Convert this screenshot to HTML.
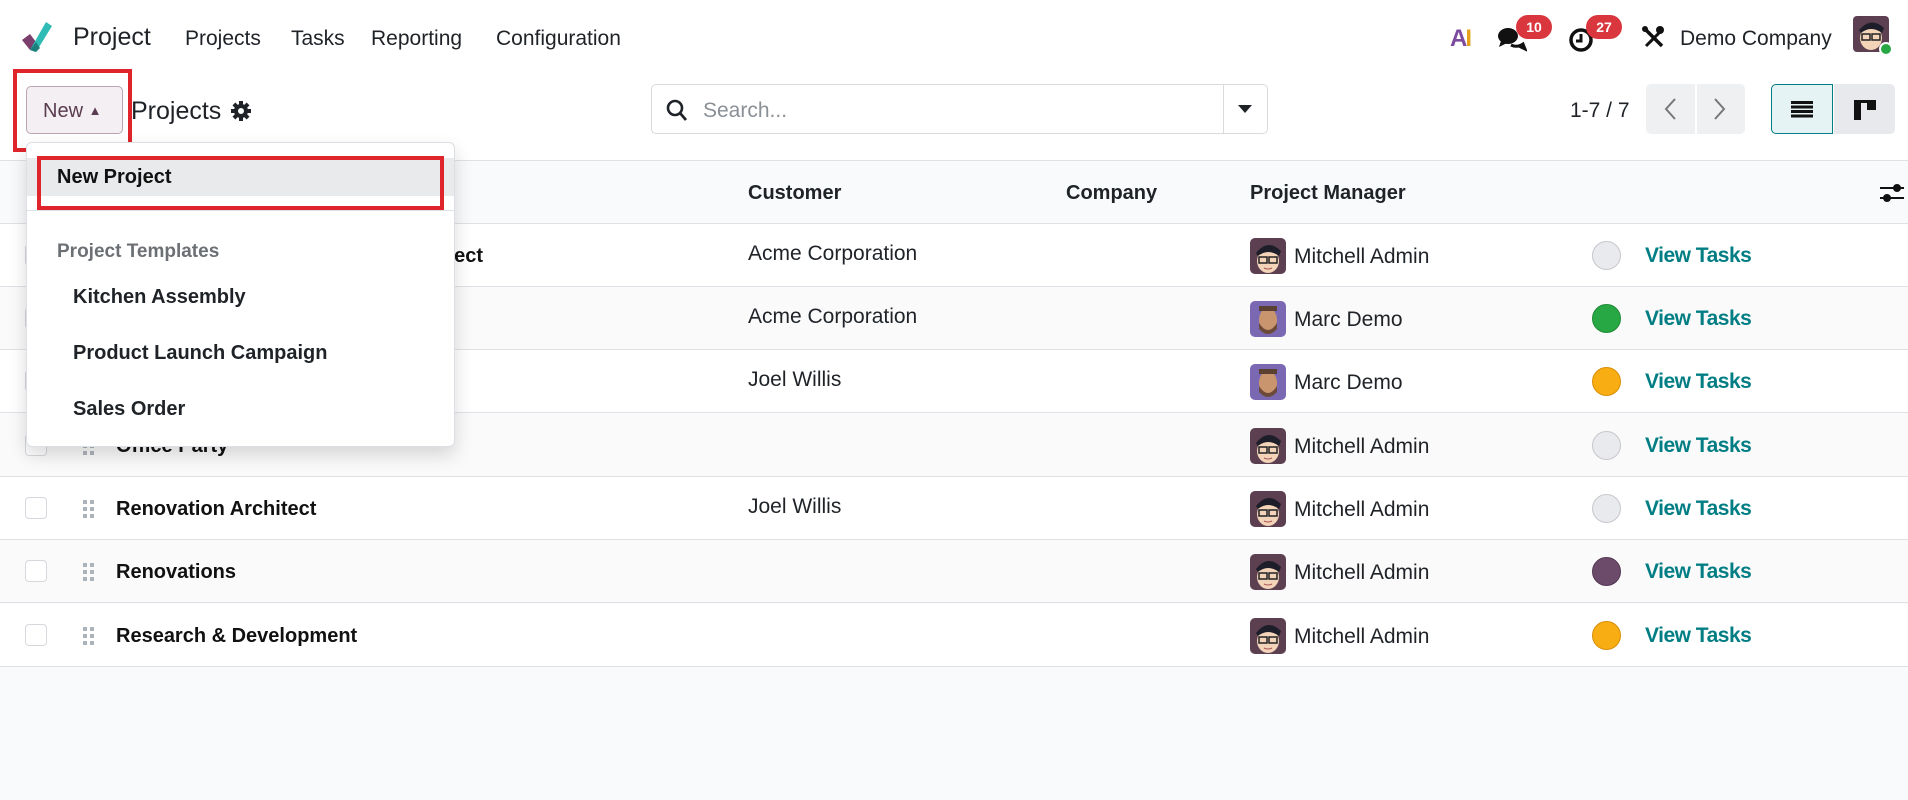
<!DOCTYPE html>
<html><head><meta charset="utf-8">
<style>
*{box-sizing:border-box;margin:0;padding:0}
body{width:1908px;height:800px;overflow:hidden;background:#f9fafb;font-family:"Liberation Sans",sans-serif;color:#1f2328;position:relative}
.abs{position:absolute}
.top{position:absolute;left:0;top:0;width:1908px;height:160px;background:#fff}
.nav{font-size:21px;top:27px;color:#1f2328}
.badge{background:#d9363e;color:#fff;font-size:14px;font-weight:bold;border-radius:12px;height:24px;line-height:24px;text-align:center;width:36px}
.row{position:absolute;left:0;width:1908px;height:63px;border-bottom:1px solid #dee2e6;background:#fff}
.row.alt{background:#fafafa}
.cb{position:absolute;left:25px;top:20px;width:22px;height:22px;border:1px solid #d5d8dc;border-radius:4px;background:#fff}
.drag{position:absolute;left:83px;top:23px;width:12px;height:18px}
.nm{position:absolute;left:116px;top:0;line-height:64px;font-size:20px;font-weight:bold;color:#111}
.av{position:absolute;left:1250px;top:14px;width:36px;height:36px;border-radius:5px;overflow:hidden}
.mgr{position:absolute;left:1294px;top:0;line-height:66px;font-size:21px;color:#1f2328}
.st{position:absolute;left:1592px;top:17px;width:29px;height:29px;border-radius:50%}
.vt{position:absolute;left:1645px;top:0;line-height:64px;font-size:21px;color:#017e84;font-weight:bold;letter-spacing:-0.5px}
.cu{position:absolute;left:748px;top:0;line-height:60px;font-size:21px}
.mi{position:absolute;left:73px;font-size:20px;font-weight:bold;color:#1f2328}
</style></head><body>
<div class="top"></div>
<svg class="abs" style="left:20px;top:18px" width="32" height="36" viewBox="0 0 32 36">
<path d="M2 22 L10 16 L16 24 L10 32 Z" fill="#7b3f6e"/>
<path d="M10 32 L26 4 L32 8 L16 34 Z" fill="#2ebcb4"/>
<path d="M10 32 L16 24 L20 30 L16 34 Z" fill="#1c7f7c"/>
</svg>
<div class="abs" style="left:73px;top:23px;font-size:25px;color:#1f2328">Project</div>
<div class="abs nav" style="left:185px">Projects</div>
<div class="abs nav" style="left:291px">Tasks</div>
<div class="abs nav" style="left:371px">Reporting</div>
<div class="abs nav" style="left:496px">Configuration</div>

<div class="abs" style="left:1450px;top:25px;font-size:24px;font-weight:bold;color:#e5a21a;letter-spacing:-2px"><span style="color:#7c4a9e">A</span>I</div>
<svg class="abs" style="left:1497px;top:26px" width="30" height="26" viewBox="0 0 30 26"><ellipse cx="11" cy="10" rx="10" ry="8" fill="#111"/><path d="M4 15 L2 21 L10 17Z" fill="#111"/><path d="M14 19 Q20 22 26 18 L28 23 L22 20" fill="none" stroke="#111" stroke-width="3"/></svg>
<div class="abs badge" style="left:1516px;top:15px">10</div>
<svg class="abs" style="left:1568px;top:26px" width="28" height="28" viewBox="0 0 28 28"><circle cx="13" cy="14" r="10" fill="none" stroke="#111" stroke-width="3.5"/><path d="M13 8 V15 H8" fill="none" stroke="#111" stroke-width="3"/></svg>
<div class="abs badge" style="left:1586px;top:15px">27</div>
<svg class="abs" style="left:1640px;top:24px" width="26" height="26" viewBox="0 0 26 26"><path d="M4 4 L22 22" stroke="#111" stroke-width="3.5"/><path d="M22 6 L6 22" stroke="#111" stroke-width="3"/><circle cx="20" cy="6" r="4" fill="#111"/><circle cx="5" cy="5" r="3" fill="#111"/></svg>
<div class="abs" style="left:1680px;top:27px;font-size:21px">Demo Company</div>
<svg class="abs" style="left:1853px;top:16px" width="40" height="40" viewBox="0 0 40 40"><rect x="0" y="0" width="36" height="36" rx="4" fill="#5c3f50"/><ellipse cx="18" cy="22" rx="11" ry="12" fill="#f3d4b8"/><path d="M6 14 Q18 0 31 12 L29 17 Q18 9 8 17Z" fill="#1e1e2a"/><rect x="9" y="18" width="8" height="6" fill="none" stroke="#222" stroke-width="1.5"/><rect x="19" y="18" width="8" height="6" fill="none" stroke="#222" stroke-width="1.5"/><circle cx="33" cy="33" r="6" fill="#28a745" stroke="#fff" stroke-width="2"/></svg>

<div class="abs" style="left:26px;top:86px;width:97px;height:48px;border:1px solid #b9a6b2;border-radius:5px;background:#f4eff2;font-size:20px;color:#5a3c50;line-height:48px;padding-left:16px">New <span style="font-size:13px;vertical-align:2px">▲</span></div>
<div class="abs" style="left:13px;top:69px;width:119px;height:83px;border:4px solid #e0242b"></div>
<div class="abs" style="left:131px;top:97px;font-size:25px;color:#1f2328">Projects</div>
<svg class="abs" style="left:231px;top:101px" width="20" height="20" viewBox="0 0 20 20"><g fill="#1f2328"><circle cx="10" cy="10" r="7"/><rect x="8" y="0" width="4" height="20"/><rect x="0" y="8" width="20" height="4"/><rect x="8" y="0" width="4" height="20" transform="rotate(45 10 10)"/><rect x="8" y="0" width="4" height="20" transform="rotate(-45 10 10)"/></g><circle cx="10" cy="10" r="3" fill="#fff"/></svg>

<div class="abs" style="left:651px;top:84px;width:617px;height:50px;border:1px solid #d8dadd;border-radius:5px;background:#fff"></div>
<div class="abs" style="left:1223px;top:85px;width:1px;height:48px;background:#d8dadd"></div>
<svg class="abs" style="left:666px;top:99px" width="22" height="24" viewBox="0 0 22 24"><circle cx="9" cy="9" r="7" fill="none" stroke="#1f2328" stroke-width="2.6"/><path d="M14 14 L20 21" stroke="#1f2328" stroke-width="2.8"/></svg>
<div class="abs" style="left:703px;top:99px;font-size:21px;color:#8a9096">Search...</div>
<div class="abs" style="left:1238px;top:105px;width:0;height:0;border-left:7px solid transparent;border-right:7px solid transparent;border-top:8px solid #1f2328"></div>

<div class="abs" style="left:1570px;top:99px;font-size:21px">1-7 / 7</div>
<div class="abs" style="left:1646px;top:84px;width:49px;height:50px;background:#eff0f2;border-radius:5px 0 0 5px"></div>
<div class="abs" style="left:1697px;top:84px;width:48px;height:50px;background:#eff0f2;border-radius:0 5px 5px 0"></div>
<svg class="abs" style="left:1663px;top:98px" width="14" height="22" viewBox="0 0 14 22"><path d="M12 1 L3 11 L12 21" fill="none" stroke="#777" stroke-width="2"/></svg>
<svg class="abs" style="left:1713px;top:98px" width="14" height="22" viewBox="0 0 14 22"><path d="M2 1 L11 11 L2 21" fill="none" stroke="#777" stroke-width="2"/></svg>
<div class="abs" style="left:1771px;top:84px;width:62px;height:50px;background:#e6f3f4;border:1px solid #017e84;border-radius:5px 0 0 5px"></div>
<div class="abs" style="left:1834px;top:84px;width:61px;height:50px;background:#e7e9ec;border-radius:0 5px 5px 0"></div>
<svg class="abs" style="left:1791px;top:101px" width="22" height="17" viewBox="0 0 22 17"><g fill="#111"><rect y="0" width="22" height="3"/><rect y="4.5" width="22" height="3"/><rect y="9" width="22" height="3"/><rect y="13.5" width="22" height="3"/></g></svg>
<svg class="abs" style="left:1854px;top:100px" width="22" height="20" viewBox="0 0 22 20"><g fill="#111"><rect x="0" y="0" width="22" height="3"/><rect x="0" y="0" width="7" height="20"/><rect x="13" y="0" width="9" height="10"/></g></svg>

<div class="abs" style="left:0;top:160px;width:1908px;height:64px;background:#f9fafb;border-top:1px solid #dee2e6;border-bottom:1px solid #dee2e6"></div>
<div class="abs" style="left:748px;top:182px;font-size:20px;font-weight:bold">Customer</div>
<div class="abs" style="left:1066px;top:182px;font-size:20px;font-weight:bold">Company</div>
<div class="abs" style="left:1250px;top:182px;font-size:20px;font-weight:bold">Project Manager</div>
<svg class="abs" style="left:1880px;top:182px" width="24" height="22" viewBox="0 0 24 22"><path d="M0 6 H24 M0 16 H24" stroke="#111" stroke-width="2"/><circle cx="17" cy="6" r="4" fill="#111"/><circle cx="7" cy="16" r="4" fill="#111"/></svg>

<svg width="0" height="0" style="position:absolute"><defs>
<symbol id="mitch" viewBox="0 0 36 36"><rect width="36" height="36" fill="#5c3f50"/><ellipse cx="18" cy="23" rx="11" ry="12" fill="#f3d4b8"/><path d="M6 15 Q18 0 31 13 L29 18 Q18 10 8 18Z" fill="#1e1e2a"/><rect x="9" y="19" width="8" height="6" fill="none" stroke="#222" stroke-width="1.5"/><rect x="19" y="19" width="8" height="6" fill="none" stroke="#222" stroke-width="1.5"/><path d="M14 30 Q18 32 22 30" stroke="#a55" fill="none"/></symbol>
<symbol id="marc" viewBox="0 0 36 36"><rect width="36" height="36" fill="#7a68b3"/><ellipse cx="18" cy="19" rx="9" ry="12" fill="#c9956e"/><path d="M9 22 Q18 36 27 22 L27 28 Q18 38 9 28Z" fill="#6b4a3a"/><rect x="9" y="5" width="18" height="5" fill="#5a4030"/></symbol>
<symbol id="dr" viewBox="0 0 12 18"><g fill="#adb3ba"><rect x="0" y="0" width="4" height="4"/><rect x="7" y="0" width="4" height="4"/><rect x="0" y="7" width="4" height="4"/><rect x="7" y="7" width="4" height="4"/><rect x="0" y="14" width="4" height="4"/><rect x="7" y="14" width="4" height="4"/></g></symbol>
</defs></svg>

<div class="row" style="top:224px"><div class="cb"></div><svg class="drag"><use href="#dr"/></svg><div class="nm" style="left:180px;width:303px;text-align:right;overflow:hidden;white-space:nowrap">Kitchen Remodeling Project</div><div class="cu">Acme Corporation</div><svg class="av"><use href="#mitch"/></svg><div class="mgr">Mitchell Admin</div><div class="st" style="background:#e9eaee;border:1px solid #c8c8cc"></div><div class="vt">View Tasks</div></div>
<div class="row alt" style="top:287px"><div class="cb"></div><svg class="drag"><use href="#dr"/></svg><div class="nm">After-Sales Services</div><div class="cu">Acme Corporation</div><svg class="av"><use href="#marc"/></svg><div class="mgr">Marc Demo</div><div class="st" style="background:#28a745;border:1px solid #1e8a36"></div><div class="vt">View Tasks</div></div>
<div class="row" style="top:350px"><div class="cb"></div><svg class="drag"><use href="#dr"/></svg><div class="nm">Home Make Over</div><div class="cu">Joel Willis</div><svg class="av"><use href="#marc"/></svg><div class="mgr">Marc Demo</div><div class="st" style="background:#f8ad12;border:1px solid #d8900a"></div><div class="vt">View Tasks</div></div>
<div class="row alt" style="top:414px"><div class="cb"></div><svg class="drag"><use href="#dr"/></svg><div class="nm">Office Party</div><svg class="av"><use href="#mitch"/></svg><div class="mgr">Mitchell Admin</div><div class="st" style="background:#e9eaee;border:1px solid #c8c8cc"></div><div class="vt">View Tasks</div></div>
<div class="row" style="top:477px"><div class="cb"></div><svg class="drag"><use href="#dr"/></svg><div class="nm">Renovation Architect</div><div class="cu">Joel Willis</div><svg class="av"><use href="#mitch"/></svg><div class="mgr">Mitchell Admin</div><div class="st" style="background:#e9eaee;border:1px solid #c8c8cc"></div><div class="vt">View Tasks</div></div>
<div class="row alt" style="top:540px"><div class="cb"></div><svg class="drag"><use href="#dr"/></svg><div class="nm">Renovations</div><svg class="av"><use href="#mitch"/></svg><div class="mgr">Mitchell Admin</div><div class="st" style="background:#6b4a6a;border:1px solid #553853"></div><div class="vt">View Tasks</div></div>
<div class="row" style="top:604px"><div class="cb"></div><svg class="drag"><use href="#dr"/></svg><div class="nm">Research &amp; Development</div><svg class="av"><use href="#mitch"/></svg><div class="mgr">Mitchell Admin</div><div class="st" style="background:#f8ad12;border:1px solid #d8900a"></div><div class="vt">View Tasks</div></div>

<div class="abs" style="left:26px;top:142px;width:429px;height:305px;background:#fff;border:1px solid #dcdfe3;border-radius:6px;box-shadow:0 8px 18px rgba(0,0,0,0.15)"></div>
<div class="abs" style="left:27px;top:158px;width:427px;height:38px;background:#e9eaec"></div>
<div class="abs" style="left:57px;top:166px;font-size:20px;font-weight:bold;color:#111">New Project</div>
<div class="abs" style="left:37px;top:156px;width:407px;height:54px;border:4px solid #e0242b"></div>
<div class="abs" style="left:27px;top:210px;width:427px;height:1px;background:#dee2e6"></div>
<div class="abs" style="left:57px;top:241px;font-size:19px;font-weight:bold;color:#6c7075">Project Templates</div>
<div class="abs mi" style="top:286px">Kitchen Assembly</div>
<div class="abs mi" style="top:342px">Product Launch Campaign</div>
<div class="abs mi" style="top:398px">Sales Order</div>
</body></html>
